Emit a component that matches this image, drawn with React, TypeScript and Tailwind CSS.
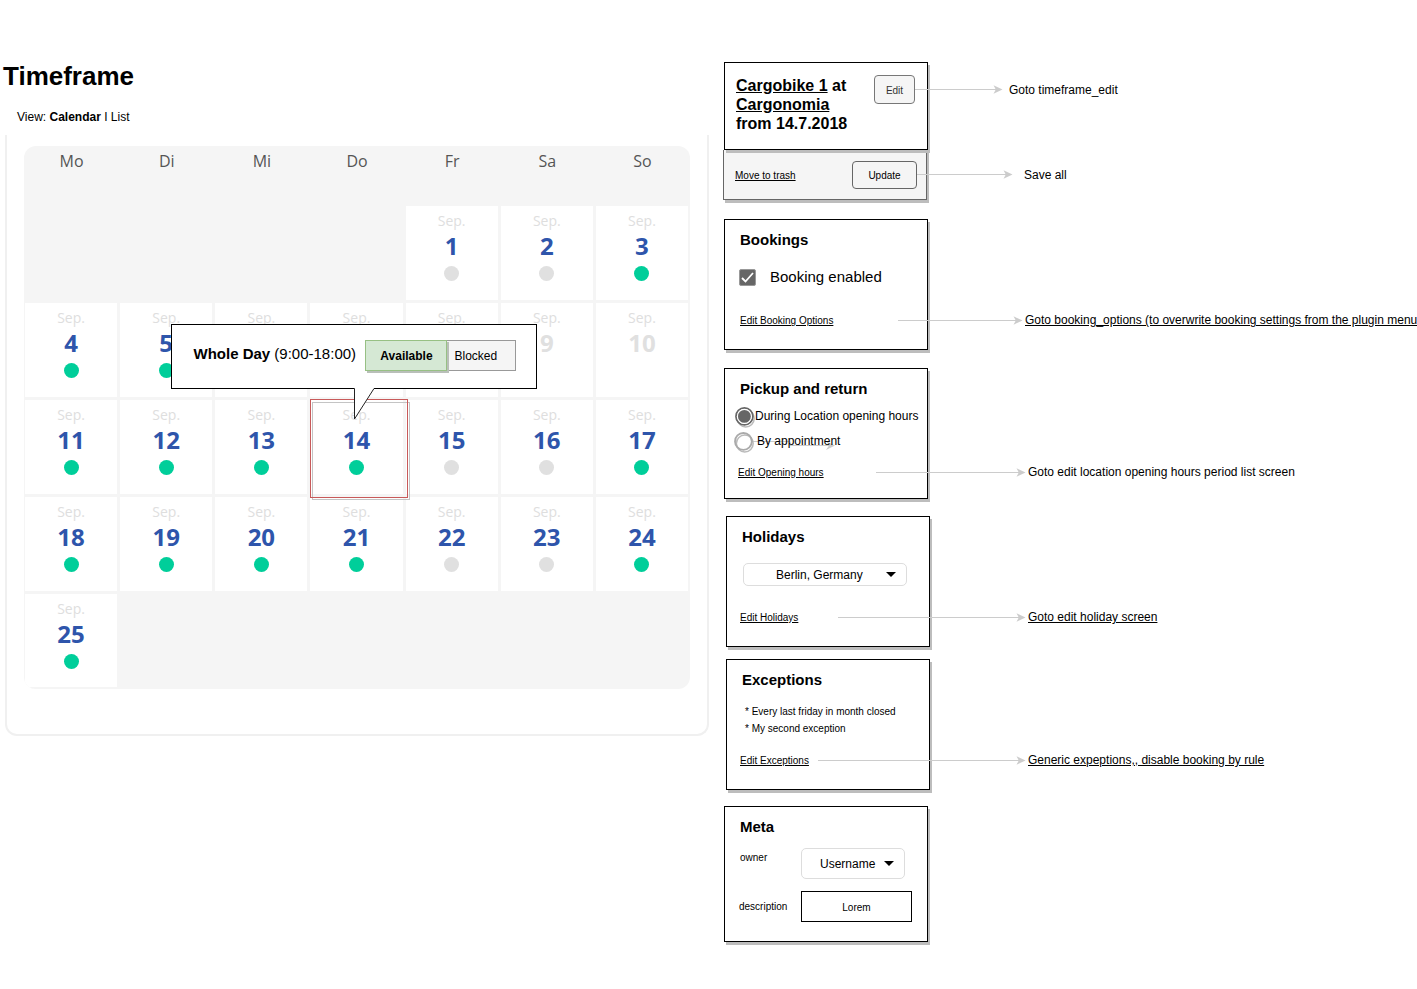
import type { ReactNode } from "react";

type Status = "free" | "busy" | "past";
type Day = { day: number; status: Status };

const WEEKDAYS = ["Mo", "Di", "Mi", "Do", "Fr", "Sa", "So"];

function day(n: number, status: Status = "free"): Day {
  return { day: n, status };
}

const WEEKS: { before: number; after: number; days: Day[] }[] = [
  { before: 4, after: 0, days: [day(1, "busy"), day(2, "busy"), day(3)] },
  {
    before: 0,
    after: 0,
    days: [day(4), day(5), day(6), day(7), day(8, "busy"), day(9, "past"), day(10, "past")],
  },
  {
    before: 0,
    after: 0,
    days: [day(11), day(12), day(13), day(14), day(15, "busy"), day(16, "busy"), day(17)],
  },
  {
    before: 0,
    after: 0,
    days: [day(18), day(19), day(20), day(21), day(22, "busy"), day(23, "busy"), day(24)],
  },
  { before: 0, after: 6, days: [day(25)] },
];

const SELECTED_DAY = 14;

const DOT: Record<Status, string> = {
  free: "bg-[#00ce9a]",
  busy: "bg-[#e0e0e0]",
  past: "bg-transparent",
};

function DayPopup() {
  return (
    <div className="absolute bottom-[105px] left-1/2 z-10 -ml-[185px] flex h-[65px] w-[366px] items-start border border-black bg-white pl-[21px] pt-[15px] font-['Liberation_Sans',Arial,sans-serif] text-black">
      <span className="mt-1 w-[172px] whitespace-nowrap text-left text-[15px] leading-5">
        <b>Whole Day</b> (9:00-18:00)
      </span>
      <span className="flex">
        <button
          type="button"
          aria-pressed="true"
          className="z-10 h-[31px] w-[82px] border border-[#97c084] bg-[#d5e8d4] text-xs font-bold shadow-[2px_2px_0_#b9bfb9]"
        >
          Available
        </button>
        <button
          type="button"
          aria-pressed="false"
          className="-ml-px h-[31px] w-[70px] border border-[#999] bg-[#f5f5f5] pl-[7px] text-left text-xs"
        >
          Blocked
        </button>
      </span>
      <svg className="absolute left-[181px] top-[62px]" width="24" height="34" viewBox="0 0 24 34" aria-hidden="true">
        <path d="M1.5 0V32L21 1.5V0Z" fill="#fff" />
        <path d="M1.5 1.5V32L21 1.5" fill="none" stroke="#222" />
      </svg>
    </div>
  );
}

function DayCell({ day: n, status }: Day) {
  const selected = n === SELECTED_DAY;
  return (
    <td
      className={`border-b-2 border-l border-r-2 border-t border-[#f5f5f5] bg-white p-0 pt-[7px] text-center align-top ${selected ? "relative z-10" : ""}`}
    >
      <div className="text-sm leading-4 text-[#dedede]">Sep.</div>
      <div className={`mt-0.5 text-2xl font-bold leading-[30px] ${status === "past" ? "text-[#e0e0e0]" : "text-[#2e55ab]"}`}>
        {n}
      </div>
      <div className={`mx-auto mt-[5px] size-[15px] rounded-full ${DOT[status]}`} />
      {selected && (
        <>
          <div className="absolute -bottom-[6px] -right-[7px] left-0.5 top-[2px] border border-[#c4c4c4]" />
          <div className="absolute -bottom-1 -right-[5px] -top-px left-0 border border-[#c85a5a]" />
          <DayPopup />
        </>
      )}
    </td>
  );
}

function Calendar() {
  return (
    <div className="ml-[5px] rounded-b-xl border-2 border-t-0 border-[#f0f0f0] pb-[45px] pl-[17px] pr-[17px] pt-[11px]">
      <div className="overflow-hidden rounded-xl bg-[#f5f5f5]">
        <table className="w-full table-fixed border-separate border-spacing-0 font-['Open_Sans','Noto_Sans',sans-serif]">
          <thead>
            <tr className="h-[59px]">
              {WEEKDAYS.map((name) => (
                <th key={name} className="p-0 pt-1 align-top text-base font-normal leading-[22px] text-[#555]">
                  {name}
                </th>
              ))}
            </tr>
          </thead>
          <tbody>
            {WEEKS.map((week) => (
              <tr key={week.days[0].day} className="h-[97px] last:h-24">
                {week.before > 0 && <td colSpan={week.before} />}
                {week.days.map((d) => (
                  <DayCell key={d.day} {...d} />
                ))}
                {week.after > 0 && <td colSpan={week.after} />}
              </tr>
            ))}
          </tbody>
        </table>
      </div>
    </div>
  );
}

function Arrow({ className }: { className: string }) {
  return (
    <span className={`flex shrink-0 items-center ${className}`} aria-hidden="true">
      <span className="h-px flex-1 bg-[#ccc]" />
      <svg className="-ml-1 shrink-0" width="10" height="9" viewBox="0 0 10 9">
        <path d="M0.5 0.3L9.5 4.5L0.5 8.7L2.8 4.5Z" fill="#ccc" />
      </svg>
    </span>
  );
}

function Note({ children, underline = false }: { children: ReactNode; underline?: boolean }) {
  return underline ? (
    <a href="#" className="whitespace-nowrap text-xs underline">
      {children}
    </a>
  ) : (
    <span className="whitespace-nowrap text-xs">{children}</span>
  );
}

function Card({ title, className, children }: { title: string; className: string; children: ReactNode }) {
  return (
    <section
      className={`flex w-[204px] flex-col border border-black bg-white pt-[10px] shadow-[2px_3px_0_#bdbdbd] ${className}`}
    >
      <h2 className="pl-[15px] text-[15px] font-bold leading-5">{title}</h2>
      {children}
    </section>
  );
}

function SmallLink({ children, className = "" }: { children: ReactNode; className?: string }) {
  return (
    <a href="#" className={`shrink-0 whitespace-nowrap pt-0.5 text-[10px] leading-4 underline ${className}`}>
      {children}
    </a>
  );
}

function Radio({ label, defaultChecked = false, className }: { label: ReactNode; defaultChecked?: boolean; className: string }) {
  return (
    <label className={`flex h-[25px] items-center whitespace-nowrap text-xs ${className}`}>
      <input type="radio" name="pickup" defaultChecked={defaultChecked} className="peer size-0 appearance-none" />
      <svg
        className="mt-[3px] shrink-0 text-[#aaa] peer-checked:text-[#666] peer-checked:[&_.dot]:opacity-100"
        width="21"
        height="22"
        viewBox="0 0 21 22"
        aria-hidden="true"
      >
        <circle cx="11.8" cy="12.5" r="8.4" fill="none" stroke="#bbb" strokeWidth="1.5" />
        <circle cx="10.4" cy="10.4" r="8.4" fill="none" stroke="currentColor" strokeWidth="1.8" />
        <circle className="dot opacity-0" cx="10.4" cy="10.4" r="7.6" fill="#fff" />
        <circle className="dot opacity-0" cx="10.4" cy="10.4" r="6.4" fill="currentColor" />
      </svg>
      {label}
    </label>
  );
}

function Select({ label, value, className, caret }: { label: string; value: string; className: string; caret: string }) {
  return (
    <div className="relative w-max">
      <select
        id={label}
        aria-label={label}
        defaultValue={value}
        className={`block appearance-none rounded-[5px] border border-[#ddd] bg-white text-xs ${className}`}
      >
        <option>{value}</option>
      </select>
      <svg className={`pointer-events-none absolute top-1/2 -mt-[3px] ${caret}`} width="10" height="5" viewBox="0 0 10 5" aria-hidden="true">
        <path d="M0 0H10L5 5Z" />
      </svg>
    </div>
  );
}

function Sidebar() {
  return (
    <aside className="w-[693px] shrink-0 pt-[62px]">
      <section className="relative flex h-[88px] w-[204px] items-start border border-black bg-white pl-[11px] pt-3 shadow-[2px_3px_0_#bdbdbd]">
        <h2 className="w-[138px] shrink-0 pt-px text-base font-bold leading-[19px]">
          <a href="#" className="underline">Cargobike 1</a> at <a href="#" className="underline">Cargonomia</a>
          <br />
          from 14.7.2018
        </h2>
        <div className="flex items-center">
          <button type="button" className="h-[29px] w-[41px] shrink-0 rounded border border-[#777] bg-[#f5f5f5] pt-0.5 text-[10px] text-[#333]">
            Edit
          </button>
          <Arrow className="mr-1.5 w-[88px]" />
          <Note>Goto timeframe_edit</Note>
        </div>
      </section>
      <div className="-ml-px flex h-[50px] w-[204px] items-center border border-t-0 border-[#666] bg-[#f5f5f5] pl-[11px] shadow-[2px_3px_0_#bdbdbd]">
        <SmallLink className="w-[117px]">Move to trash</SmallLink>
        <button type="button" className="h-7 w-[65px] shrink-0 rounded border border-[#666] bg-[#f5f5f5] pt-0.5 text-[10px]">
          Update
        </button>
        <Arrow className="mr-[11px] w-24" />
        <Note>Save all</Note>
      </div>

      <Card title="Bookings" className="mt-[19px] h-[131px]">
        <label className="mt-[17px] flex h-5 items-center pl-[14px] text-[15px]">
          <span className="relative mr-[14px] size-[17px]">
            <input type="checkbox" defaultChecked className="peer block size-[17px] appearance-none rounded-xs border border-[#999] bg-white checked:bg-[#666]" />
            <svg className="pointer-events-none absolute inset-0 opacity-0 peer-checked:opacity-100" width="17" height="17" viewBox="0 0 17 17" aria-hidden="true">
              <path d="M3 9L6.5 12.5L14 4" fill="none" stroke="#fff" strokeWidth="1.8" />
            </svg>
          </span>
          Booking enabled
        </label>
        <div className="mt-6 flex w-max items-center pl-[15px]">
          <SmallLink className="w-[158px]">Edit Booking Options</SmallLink>
          <Arrow className="mr-0.5 w-[125px]" />
          <Note underline>Goto booking_options (to overwrite booking settings from the plugin menu</Note>
        </div>
      </Card>

      <Card title="Pickup and return" className="mt-[18px] h-[131px]">
        <Radio label="During Location opening hours" defaultChecked className="mt-1 pl-[9px]" />
        <div className="relative">
          <svg className="absolute left-[27px] top-2" width="90" height="14" viewBox="0 0 90 14" aria-hidden="true">
            <path d="M0 5.5H38V9.5H80" fill="none" stroke="#ccc" />
            <path d="M74 5L83 9.5L74 14L77 9.5Z" fill="#ccc" />
          </svg>
          <Radio label={<span className="pl-[3px]">By appointment</span>} className="relative pl-2" />
        </div>
        <div className="mt-[10px] flex w-max items-center pl-[13px]">
          <SmallLink className="w-[138px]">Edit Opening hours</SmallLink>
          <Arrow className="mr-0.5 w-[150px]" />
          <Note>Goto edit location opening hours period list screen</Note>
        </div>
      </Card>

      <Card title="Holidays" className="ml-0.5 mt-[17px] h-[131px]">
        <div className="mt-4 pl-4">
          <Select label="Holiday region" value="Berlin, Germany" className="h-[23px] w-[164px] pl-8" caret="right-[11px]" />
        </div>
        <div className="mt-[22px] flex w-max items-center pl-[13px]">
          <SmallLink className="w-[98px]">Edit Holidays</SmallLink>
          <Arrow className="mr-0.5 w-[188px]" />
          <Note underline>Goto edit holiday screen</Note>
        </div>
      </Card>

      <Card title="Exceptions" className="ml-0.5 mt-3 h-[131px]">
        <ul className="mt-[13px] pl-[18px] text-[10px] leading-[17px]">
          <li>* Every last friday in month closed</li>
          <li>* My second exception</li>
        </ul>
        <div className="mt-[14px] flex w-max items-center pl-[13px]">
          <SmallLink className="w-[78px]">Edit Exceptions</SmallLink>
          <Arrow className="mr-0.5 w-[208px]" />
          <Note underline>Generic expeptions,, disable booking by rule</Note>
        </div>
      </Card>

      <Card title="Meta" className="mt-4 h-[136px]">
        <div className="mt-[11px] flex pl-[15px] text-[10px]">
          <label htmlFor="Owner" className="w-[61px] pt-0.5 leading-4">owner</label>
          <Select label="Owner" value="Username" className="h-[31px] w-[104px] pl-[18px]" caret="right-[11px]" />
        </div>
        <div className="mt-3 flex items-center pl-[14px] text-[10px]">
          <label htmlFor="description" className="w-[62px]">description</label>
          <input id="description" type="text" defaultValue="Lorem" className="h-[31px] w-[111px] border border-black bg-white pt-0.5 text-center" />
        </div>
      </Card>
    </aside>
  );
}

export default function App() {
  return (
    <div className="flex min-h-screen overflow-x-hidden bg-white font-['Liberation_Sans',Arial,sans-serif] text-black">
      <main className="min-w-0 flex-1 pr-[15px] pt-[61px]">
        <h1 className="pl-[3px] text-[26px] font-bold leading-[30px]">Timeframe</h1>
        <nav className="mb-[10px] mt-[18px] pl-[17px] text-xs leading-4">
          View: <a href="#" className="font-bold">Calendar</a> I <a href="#">List</a>
        </nav>
        <Calendar />
      </main>
      <Sidebar />
    </div>
  );
}
